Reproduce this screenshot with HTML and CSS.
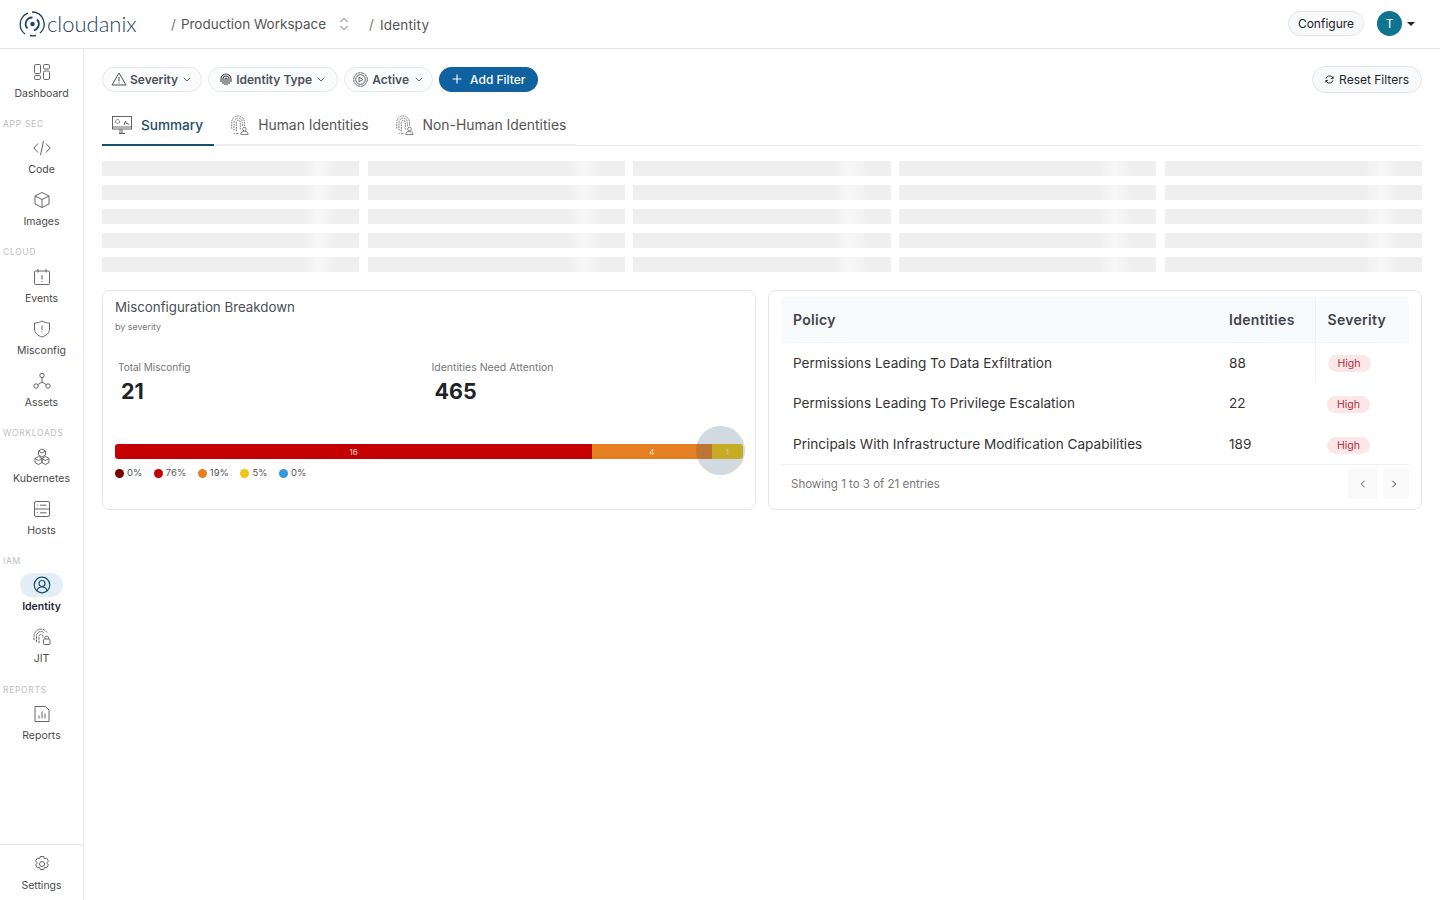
FILE: index.html
```html
<!DOCTYPE html>
<html lang="en">
<head>
  <meta charset="UTF-8">
  <title>Cloudanix - Identity</title>
  <link rel="stylesheet" href="styles.css">
</head>
<body>
  <svg class="defs" width="0" height="0">
    <symbol id="i-print" viewBox="0 0 22 22">
      <g fill="none" stroke="#666" stroke-width=".9" stroke-dasharray="2 .8">
        <path d="M3 15V8a7 7 0 0 1 14 0v4"/>
        <path d="M5.500 17V8a4.600 4.600 0 0 1 9.200 0v5"/>
        <path d="M8 18V8a2.200 2.200 0 0 1 4.400 0v8"/>
        <path d="M5 20a10 10 0 0 0 6 0"/>
      </g>
      <g fill="#fff" stroke="#666" stroke-width=".9"><circle cx="17" cy="15.500" r="2"/><path d="M13 21.500c0-2.500 1.800-3.500 4-3.500s4 1 4 3.500z"/></g>
    </symbol>
  </svg>

  <header class="topbar">
    <div class="logo">
      <svg width="27" height="26" viewBox="0 0 27 26" fill="none" stroke="#1d4560" stroke-width="1.300">
        <path d="M6 23A12 12 0 0 1 9 2.200"/><path d="M13 1a12 12 0 0 1 8 21"/><path d="M17 24.500a12 12 0 0 1-6 0"/>
        <path d="M8.500 17.500A6.500 6.500 0 0 1 13.500 6.500" stroke-width="1.800"/><path d="M18 8.500a6.500 6.500 0 0 1-3 10.800" stroke-width="1.800"/>
        <circle cx="13.500" cy="13" r="1.600" fill="#1d4560"/>
      </svg>
      <span class="logo-text">cloudanix</span>
    </div>
    <div class="crumbs">
      <span class="slash">/</span>
      <span class="crumb">Production Workspace</span>
      <svg class="updown" width="10" height="14" viewBox="0 0 10 14" fill="none" stroke="#666" stroke-width="1"><path d="M1.500 5 5 1.500 8.500 5M1.500 9 5 12.500 8.500 9"/></svg>
      <span class="slash slash2">/</span>
      <span class="crumb crumb-low">Identity</span>
    </div>
    <div class="top-right">
      <button class="btn-light configure">Configure</button>
      <span class="avatar">T</span>
      <span class="caret"></span>
    </div>
  </header>

  <div class="shell">
    <aside class="sidebar">
      <nav class="nav">
        <a class="nav-item">
          <span class="nav-icon"><svg width="18" height="18" viewBox="0 0 18 18" fill="none" stroke="#555"><rect x="1.500" y="1.500" width="6" height="9" rx="1.300"/><rect x="10.500" y="1.500" width="6" height="4.500" rx="1.300"/><rect x="1.500" y="12.500" width="6" height="4" rx="1.300"/><rect x="10.500" y="8" width="6" height="8.500" rx="1.300"/></svg></span>
          <span class="nav-label">Dashboard</span>
        </a>
        <div class="nav-section">APP SEC</div>
        <a class="nav-item">
          <span class="nav-icon"><svg width="18" height="16" viewBox="0 0 18 16" fill="none" stroke="#555"><path d="M5 3.500.8 8 5 12.500M13 3.500 17.200 8 13 12.500M10.500 1 7.500 15"/></svg></span>
          <span class="nav-label">Code</span>
        </a>
        <a class="nav-item">
          <span class="nav-icon"><svg width="18" height="18" viewBox="0 0 18 18" fill="none" stroke="#555" stroke-linejoin="round"><path d="M9 1.500 16 5v8l-7 3.500L2 13V5z"/><path d="M2 5l7 3.500L16 5M9 8.500v8"/></svg></span>
          <span class="nav-label">Images</span>
        </a>
        <div class="nav-section">CLOUD</div>
        <a class="nav-item">
          <span class="nav-icon"><svg width="18" height="18" viewBox="0 0 18 18" fill="none" stroke="#555"><rect x="1.500" y="3" width="15" height="13.500" rx="1"/><path d="M5 1v3.500M13 1v3.500M9 7v4.500M9 13v1"/></svg></span>
          <span class="nav-label">Events</span>
        </a>
        <a class="nav-item">
          <span class="nav-icon"><svg width="18" height="18" viewBox="0 0 18 18" fill="none" stroke="#555"><path d="M9 1c2.500 1.500 5 2 7.500 2v6c0 4-3.500 6.800-7.500 8-4-1.200-7.500-4-7.500-8V3C4 3 6.500 2.500 9 1z"/><path d="M9 5.500V10M9 11.500v1"/></svg></span>
          <span class="nav-label">Misconfig</span>
        </a>
        <a class="nav-item">
          <span class="nav-icon"><svg width="18" height="18" viewBox="0 0 18 18" fill="none" stroke="#555"><circle cx="9" cy="3.500" r="2.200"/><circle cx="3" cy="14" r="2.200"/><circle cx="15" cy="14" r="2.200"/><path d="M9 5.700V10M9 10l-4.200 2.700M9 10l4.200 2.700"/></svg></span>
          <span class="nav-label">Assets</span>
        </a>
        <div class="nav-section">WORKLOADS</div>
        <a class="nav-item">
          <span class="nav-icon"><svg width="18" height="18" viewBox="0 0 18 18" fill="none" stroke="#555" stroke-linejoin="round"><path d="M9 1l3.500 2v4L9 9 5.500 7V3zM5.500 8.500 9 10.500v4l-3.500 2-3.500-2v-4zM12.500 8.500l3.500 2v4l-3.500 2L9 14.500v-4z"/><path d="M5.500 3 9 5l3.500-2M2 10.500l3.500 2 3.500-2 3.500 2 3.500-2"/></svg></span>
          <span class="nav-label">Kubernetes</span>
        </a>
        <a class="nav-item">
          <span class="nav-icon"><svg width="18" height="18" viewBox="0 0 18 18" fill="none" stroke="#555"><rect x="1.500" y="1.500" width="15" height="15" rx="1.500"/><path d="M1.500 9h15M7 5.200h6.500M7 12.800h6.500M4 5.200h.8M4 12.800h.8"/></svg></span>
          <span class="nav-label">Hosts</span>
        </a>
        <div class="nav-section">IAM</div>
        <a class="nav-item active">
          <span class="nav-icon"><svg width="18" height="18" viewBox="0 0 18 18" fill="none" stroke="#17506f" stroke-width="1.200"><circle cx="9" cy="9" r="7.800"/><circle cx="9" cy="7.500" r="3"/><path d="M3.800 15c.6-2.500 2.600-4 5.200-4s4.600 1.500 5.200 4"/></svg></span>
          <span class="nav-label">Identity</span>
        </a>
        <a class="nav-item">
          <span class="nav-icon"><svg width="19" height="18" viewBox="0 0 19 18" fill="none" stroke="#555"><g stroke-dasharray="2.500 .8"><path d="M2 12V8a7 7 0 0 1 13-3.500"/><path d="M4.500 14V8a4.500 4.500 0 0 1 8-2.800"/><path d="M7 15V8.500a2 2 0 0 1 4 0V10"/></g><rect x="11.500" y="11" width="6.500" height="5.500" rx="1"/><path d="M13 11V9.500a1.800 1.800 0 0 1 3.500 0V11"/></svg></span>
          <span class="nav-label">JIT</span>
        </a>
        <div class="nav-section nav-section-last">REPORTS</div>
        <a class="nav-item">
          <span class="nav-icon"><svg width="18" height="18" viewBox="0 0 18 18" fill="none" stroke="#555"><path d="M2 1.500h10.500l3.500 3.500v11.500H2z"/><path d="M6 13.500v-3M9 13.500v-7M12 13.500v-5"/></svg></span>
          <span class="nav-label">Reports</span>
        </a>
      </nav>
      <div class="nav-foot">
        <a class="nav-item">
          <span class="nav-icon"><svg width="18" height="18" viewBox="0 0 18 18" fill="none" stroke="#555"><path d="M7.200 1.500h3.600l.6 2.200 2.200-.6 1.800 3-1.600 1.700v.4l1.600 1.700-1.800 3-2.200-.6-.6 2.200H7.200l-.6-2.200-2.200.6-1.800-3 1.600-1.700v-.4L2.600 6.100l1.800-3 2.200.6z"/><circle cx="9" cy="9" r="2.500"/></svg></span>
          <span class="nav-label">Settings</span>
        </a>
      </div>
    </aside>

    <main class="main">
      <div class="filters">
        <button class="pill pill-severity">
          <svg width="16" height="14" viewBox="0 0 16 14" fill="none" stroke="#555"><path d="M8 1 15 13H1zM8 5v4.500M8 10.500v1"/></svg>
          Severity
          <svg class="chev" width="8" height="5" viewBox="0 0 8 5" fill="none" stroke="#666"><path d="M.8.8 4 4 7.200.8"/></svg>
        </button>
        <button class="pill pill-type">
          <svg width="14" height="14" viewBox="0 0 14 14" fill="none" stroke="#444" stroke-width="1.100"><path d="M2 10V7a5 5 0 0 1 10 0v3M4 12V7a3 3 0 0 1 6 0v5M6 13V7a1 1 0 0 1 2 0v6"/></svg>
          Identity Type
          <svg class="chev" width="8" height="5" viewBox="0 0 8 5" fill="none" stroke="#666"><path d="M.8.8 4 4 7.200.8"/></svg>
        </button>
        <button class="pill">
          <svg width="15" height="15" viewBox="0 0 15 15" fill="none" stroke="#555" stroke-width=".9"><circle cx="7.500" cy="7.500" r="6.800" stroke-dasharray="3 .6"/><circle cx="7.500" cy="7.500" r="4.800"/><path d="M6 5.200 10 7.500 6 9.800z"/></svg>
          Active
          <svg class="chev" width="8" height="5" viewBox="0 0 8 5" fill="none" stroke="#666"><path d="M.8.8 4 4 7.200.8"/></svg>
        </button>
        <button class="add-filter">
          <svg width="10" height="10" viewBox="0 0 10 10" stroke="#fff" stroke-width="1.100"><path d="M5 .5v9M.5 5h9"/></svg>
          Add Filter
        </button>
        <button class="btn-light reset">
          <svg width="9" height="9" viewBox="0 0 10 10" fill="none" stroke="#333" stroke-width="1.100"><path d="M1.200 4A4 4 0 0 1 8.200 2.500L9 4M8.800 6A4 4 0 0 1 1.800 7.500L1 6M9 1.500V4H6.500M1 8.500V6h2.500"/></svg>
          Reset Filters
        </button>
      </div>

      <div class="tabs-wrap">
        <div class="tabs">
          <a class="tab selected">
            <svg width="20" height="20" viewBox="0 0 20 20" fill="none" stroke="#555" stroke-width=".9"><rect x=".5" y="1.500" width="19" height="12.500"/><path d="M.5 12h19M7 18.500h6M10 14v4.500M8 14v4.500"/><circle cx="5.500" cy="6.500" r="2" stroke-dasharray="1.500 .6"/><path d="M12 10l1.500-4 1 3 1-1 1 2"/></svg>
            Summary
          </a>
          <a class="tab"><svg width="20" height="20"><use href="#i-print"/></svg>Human Identities</a>
          <a class="tab"><svg width="20" height="20"><use href="#i-print"/></svg>Non-Human Identities</a>
        </div>
      </div>

      <div class="skeleton">
        <div class="skel-col"><i></i><i></i><i></i><i></i><i></i></div>
        <div class="skel-col"><i></i><i></i><i></i><i></i><i></i></div>
        <div class="skel-col"><i></i><i></i><i></i><i></i><i></i></div>
        <div class="skel-col"><i></i><i></i><i></i><i></i><i></i></div>
        <div class="skel-col"><i></i><i></i><i></i><i></i><i></i></div>
      </div>

      <div class="cards">
        <section class="card breakdown">
          <h2 class="card-title">Misconfiguration Breakdown</h2>
          <p class="card-sub">by severity</p>
          <div class="stats">
            <div class="stat">
              <div class="stat-label">Total Misconfig</div>
              <div class="stat-value">21</div>
            </div>
            <div class="stat stat-need">
              <div class="stat-label">Identities Need Attention</div>
              <div class="stat-value">465</div>
            </div>
          </div>
          <div class="bar">
            <span class="seg seg-red" style="width: 76%">16</span>
            <span class="seg seg-orange" style="width: 19%">4</span>
            <span class="seg seg-yellow" style="width: 5%">1</span>
            <span class="ripple"></span>
          </div>
          <ul class="legend">
            <li><b class="dot dot-crit"></b>0%</li>
            <li><b class="dot dot-high"></b>76%</li>
            <li><b class="dot dot-med"></b>19%</li>
            <li><b class="dot dot-low"></b>5%</li>
            <li><b class="dot dot-info"></b>0%</li>
          </ul>
        </section>

        <section class="card policies">
          <table class="policy-table">
            <thead>
              <tr><th class="col-policy">Policy</th><th class="col-ids">Identities</th><th class="col-sev">Severity</th></tr>
            </thead>
            <tbody>
              <tr><td>Permissions Leading To Data Exfiltration</td><td>88</td><td class="cell-sev"><span class="badge">High</span></td></tr>
              <tr><td>Permissions Leading To Privilege Escalation</td><td>22</td><td><span class="badge">High</span></td></tr>
              <tr><td>Principals With Infrastructure Modification Capabilities</td><td>189</td><td><span class="badge">High</span></td></tr>
            </tbody>
          </table>
          <div class="table-foot">
            <span class="entries">Showing 1 to 3 of 21 entries</span>
            <div class="pager">
              <button class="page-btn"><svg width="6" height="8" viewBox="0 0 6 8" fill="none" stroke="#555"><path d="M4.500.8 1.300 4l3.200 3.200"/></svg></button>
              <button class="page-btn page-next"><svg width="6" height="8" viewBox="0 0 6 8" fill="none" stroke="#333"><path d="M1.500.8 4.700 4 1.500 7.200"/></svg></button>
            </div>
          </div>
        </section>
      </div>
    </main>
  </div>
</body>
</html>
```

FILE: styles.css
```css
* {
  box-sizing: border-box;
}
html, body {
  height: 100%;
}
body {
  margin: 0;
  height: 900px;
  overflow: hidden;
  background: #fff;
  color: #222;
  font-family: Inter, "Noto Sans", sans-serif;
}
button {
  font-family: inherit;
  cursor: pointer;
}
.defs {
  position: absolute;
}

/* top bar */
.topbar {
  display: flex;
  align-items: center;
  height: 49px;
  padding: 0 23px 1px 19px;
  border-bottom: 1px solid #e7e7e7;
}
.logo {
  display: flex;
  align-items: center;
  width: 152px;
}
.logo-text {
  margin-left: 1px;
  font-family: Lato, sans-serif;
  font-weight: 300;
  font-size: 22px;
  color: #1d4560;
}
.crumbs {
  display: flex;
  align-items: center;
  font-size: 13.5px;
  color: #555;
}
.slash {
  margin-right: 5px;
  color: #777;
}
.slash2 {
  margin-left: 20px;
  margin-right: 6px;
}
.crumb-low {
  padding-top: 2px;
  letter-spacing: .2px;
}
.updown {
  margin-left: 13px;
}
.top-right {
  display: flex;
  align-items: center;
  margin-left: auto;
}
.btn-light {
  display: flex;
  align-items: center;
  border: 1px solid #e2e5e8;
  background: #f8f9fa;
  border-radius: 14px;
  color: #212529;
  font-size: 12px;
}
.configure {
  height: 25px;
  width: 76px;
  justify-content: center;
  padding: 0;
}
.avatar {
  display: flex;
  align-items: center;
  justify-content: center;
  width: 25px;
  height: 25px;
  margin-left: 13px;
  border-radius: 50%;
  background: #0e7490;
  color: #fff;
  font-size: 12px;
}
.caret {
  width: 0;
  height: 0;
  margin: 0 2px 0 5px;
  border: 4px solid transparent;
  border-top-color: #222;
  border-bottom: 0;
}

/* sidebar */
.shell {
  display: flex;
  height: 851px;
}
.sidebar {
  display: flex;
  flex-direction: column;
  flex: none;
  width: 84px;
  border-right: 1px solid #e7e7e7;
}
.nav {
  flex: 1;
  padding-top: 11px;
}
.nav-section {
  height: 24.3px;
  padding-left: 3px;
  font-size: 8.5px;
  line-height: 24.3px;
  letter-spacing: .7px;
  color: #bdbdbd;
}
.nav-section-last {
  margin-top: 1px;
}
.nav-item {
  display: flex;
  flex-direction: column;
  align-items: center;
  height: 52px;
}
.nav-icon {
  display: flex;
  align-items: center;
  justify-content: center;
  width: 43px;
  height: 24px;
  border-radius: 12px;
}
.nav-item:not(.active) svg {
  stroke: #666;
}
.nav-label {
  margin-top: 2px;
  font-size: 10.5px;
  line-height: 16px;
  color: #4a4a4a;
}
.active .nav-icon {
  background: #e4eef6;
}
.active .nav-label {
  font-weight: 600;
  color: #1f2937;
}
.nav-foot {
  height: 56px;
  padding-top: 7px;
  border-top: 1px solid #e7e7e7;
}

/* main column */
.main {
  flex: 1;
  min-width: 0;
  padding: 17px 18px 0;
}
.filters {
  display: flex;
  align-items: center;
  gap: 6px;
  height: 27px;
}
.pill {
  display: flex;
  align-items: center;
  gap: 4px;
  height: 25px;
  padding: 0 9px 1px 8px;
  border: 1px solid #e6e9ec;
  border-radius: 13px;
  background: #fafbfc;
  color: #4b5159;
  font-size: 12px;
  font-weight: 600;
}
.pill-severity {
  gap: 3px;
  padding-right: 10px;
}
.pill-type {
  gap: 3px;
  padding: 0 12px 1px 10px;
}
.chev {
  margin-left: 2px;
}
.add-filter {
  display: flex;
  align-items: center;
  gap: 8px;
  height: 25px;
  padding: 0 13px 1px;
  border: 0;
  border-radius: 13px;
  background: #0f619f;
  color: #fff;
  font-size: 12px;
  font-weight: 500;
}
.reset {
  gap: 5px;
  height: 27px;
  margin-left: auto;
  padding: 0 12px 1px;
}
.tabs-wrap {
  margin-top: 12px;
  border-bottom: 1px solid #ececec;
}
.tabs {
  display: flex;
  width: fit-content;
  height: 41px;
  border-bottom: 2px solid #eeeeee;
  margin-bottom: -1px;
}
.tab {
  display: flex;
  align-items: center;
  gap: 9px;
  margin-bottom: -2px;
  padding: 0 10px 2px 15px;
  color: #555;
  font-size: 13.9px;
  white-space: nowrap;
}
.tab.selected {
  padding: 0 11px 0 10px;
  border-bottom: 2px solid #17506f;
  color: #234e66;
  font-weight: 500;
  font-size: 13.6px;
}

/* loading rows */
.skeleton {
  display: grid;
  grid-template-columns: repeat(5, 1fr);
  gap: 8.6px;
  margin-top: 15px;
}
.skel-col {
  display: flex;
  flex-direction: column;
  gap: 9px;
}
.skel-col i {
  display: block;
  height: 15px;
  background: linear-gradient(90deg, #efefef 78%, #f7f7f7 84%, #efefef 91%);
}

/* cards */
.cards {
  display: grid;
  grid-template-columns: 1fr 1fr;
  gap: 12px;
  margin-top: 18px;
}
.card {
  height: 220px;
  border: 1px solid #e6e6e6;
  border-radius: 8px;
}
.breakdown {
  padding: 7px 12px 0;
}
.card-title {
  margin: 0;
  font-size: 13.3px;
  font-weight: 400;
  line-height: 18px;
  color: #4a4f57;
}
.card-sub {
  margin: 5px 0 0;
  font-size: 8.9px;
  line-height: 12px;
  color: #777;
}
.stats {
  display: grid;
  grid-template-columns: 1fr 1fr;
  margin-top: 27px;
  padding-left: 3px;
}
.stat-label {
  font-size: 10px;
  line-height: 14px;
  color: #777;
}
.stat-need {
  padding-left: 1px;
}
.stat-need .stat-label {
  padding-top: 1px;
  font-size: 10.5px;
}
.stat-need .stat-value {
  margin-top: 3px;
}
.stat-value {
  margin-top: 4px;
  padding-left: 3px;
  font-size: 21.5px;
  font-weight: 700;
  line-height: 26px;
  color: #1f2329;
}
.bar {
  position: relative;
  display: flex;
  height: 15px;
  margin-top: 40px;
}
.seg {
  display: flex;
  align-items: center;
  justify-content: center;
  font-size: 8px;
  color: #f6dcc8;
}
.seg-red {
  border-radius: 3px 0 0 3px;
  background: #c40000;
}
.seg-orange {
  background: #e67e22;
}
.seg-yellow {
  border-radius: 0 3px 3px 0;
  background: #f1c40f;
}
.ripple {
  position: absolute;
  left: 581px;
  top: -18px;
  width: 49px;
  height: 49px;
  border-radius: 50%;
  background: rgba(40, 85, 115, .22);
}
.legend {
  display: flex;
  gap: 11.5px;
  margin: 7px 0 0;
  padding: 0;
  list-style: none;
  font-size: 9.5px;
  line-height: 14px;
  color: #555;
}
.legend li {
  display: flex;
  align-items: center;
  gap: 3px;
}
.dot {
  width: 9px;
  height: 9px;
  border-radius: 50%;
}
.dot-crit { background: #7b0000; }
.dot-high { background: #c40000; }
.dot-med { background: #e67e22; }
.dot-low { background: #f1c40f; }
.dot-info { background: #3498db; }

/* policy table */
.policies {
  padding: 6px 12px 0;
}
.policy-table {
  width: 100%;
  border-collapse: collapse;
  table-layout: fixed;
}
.policy-table th {
  height: 45px;
  padding: 0 12px;
  background: #f9fafb;
  border-bottom: 1px solid #f3f4f5;
  text-align: left;
  font-size: 14px;
  font-weight: 600;
  letter-spacing: .3px;
  color: #3e444c;
}
.col-ids {
  width: 98px;
}
.col-sev {
  width: 94px;
  border-left: 1px solid #f0f1f2;
}
.policy-table td {
  height: 40.7px;
  padding: 0 12px;
  font-size: 13.6px;
  color: #333;
}
.policy-table tr:last-child td {
  padding-top: 2px;
  border-bottom: 1px solid #f0f1f2;
}
.cell-sev {
  border-left: 1px solid #f3f4f5;
}
.badge {
  display: inline-block;
  width: 43px;
  height: 17px;
  margin-top: 2px;
  border-radius: 9px;
  background: #fbe7e8;
  color: #b5273a;
  font-size: 10.5px;
  line-height: 17px;
  text-align: center;
  vertical-align: middle;
}
.table-foot {
  display: flex;
  align-items: center;
  justify-content: space-between;
  height: 38px;
  padding-left: 10px;
}
.entries {
  font-size: 11.5px;
  color: #777;
}
.pager {
  display: flex;
  gap: 5px;
}
.page-btn {
  display: flex;
  align-items: center;
  justify-content: center;
  width: 30px;
  height: 31px;
  padding: 0;
  border: 0;
  background: #fafafa;
}
.page-next {
  width: 26px;
  padding-right: 4px;
}
```
